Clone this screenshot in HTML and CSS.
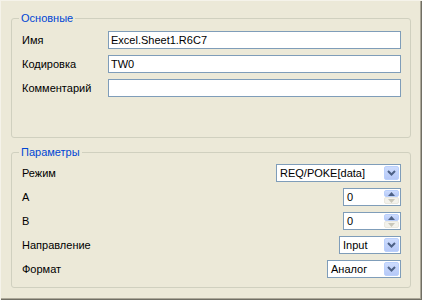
FILE: index.html
```html
<!DOCTYPE html>
<html lang="ru">
<head>
  <meta charset="UTF-8">
  <title>DDE item properties</title>
  <link rel="stylesheet" href="styles.css">
</head>
<body>
  <div class="window">
    <fieldset class="group group-main">
      <legend>Основные</legend>
      <div class="rows">
        <div class="row">
          <span class="label">Имя</span>
          <div class="edit">Excel.Sheet1.R6C7</div>
        </div>
        <div class="row">
          <span class="label">Кодировка</span>
          <div class="edit">TW0</div>
        </div>
        <div class="row">
          <span class="label">Комментарий</span>
          <div class="edit"></div>
        </div>
      </div>
    </fieldset>

    <fieldset class="group group-params">
      <legend>Параметры</legend>
      <div class="rows">
        <div class="row">
          <span class="label">Режим</span>
          <div class="combo combo-mode">
            <span class="combo-text">REQ/POKE[data]</span>
            <span class="combo-btn">
              <svg width="9" height="6" viewBox="0 0 9 6"><path d="M1 1 L4.5 4.5 L8 1" fill="none" stroke="#4d6185" stroke-width="2"/></svg>
            </span>
          </div>
        </div>
        <div class="row">
          <span class="label">A</span>
          <div class="spin">
            <span class="spin-text">0</span>
            <span class="spin-btns">
              <span class="spin-up"><svg width="7" height="4" viewBox="0 0 7 4"><path d="M0 4 L3.5 0 L7 4 Z" fill="#4d6185"/></svg></span>
              <span class="spin-down"><svg width="7" height="4" viewBox="0 0 7 4"><path d="M0 0 L3.5 4 L7 0 Z" fill="#c9c7ba"/></svg></span>
            </span>
          </div>
        </div>
        <div class="row">
          <span class="label">B</span>
          <div class="spin">
            <span class="spin-text">0</span>
            <span class="spin-btns">
              <span class="spin-up"><svg width="7" height="4" viewBox="0 0 7 4"><path d="M0 4 L3.5 0 L7 4 Z" fill="#4d6185"/></svg></span>
              <span class="spin-down"><svg width="7" height="4" viewBox="0 0 7 4"><path d="M0 0 L3.5 4 L7 0 Z" fill="#c9c7ba"/></svg></span>
            </span>
          </div>
        </div>
        <div class="row">
          <span class="label">Направление</span>
          <div class="combo combo-dir">
            <span class="combo-text">Input</span>
            <span class="combo-btn">
              <svg width="9" height="6" viewBox="0 0 9 6"><path d="M1 1 L4.5 4.5 L8 1" fill="none" stroke="#4d6185" stroke-width="2"/></svg>
            </span>
          </div>
        </div>
        <div class="row">
          <span class="label">Формат</span>
          <div class="combo combo-format">
            <span class="combo-text">Аналог</span>
            <span class="combo-btn">
              <svg width="9" height="6" viewBox="0 0 9 6"><path d="M1 1 L4.5 4.5 L8 1" fill="none" stroke="#4d6185" stroke-width="2"/></svg>
            </span>
          </div>
        </div>
      </div>
    </fieldset>
  </div>
</body>
</html>
```

FILE: styles.css
```css
body {
  margin: 0;
  font-family: "Liberation Sans", Arial, sans-serif;
  font-size: 11px;
  color: #000000;
  background-color: #ece9d8;
}
.window {
  box-sizing: border-box;
  width: 422px;
  height: 300px;
  padding: 12px 11px 0 11px;
  background-color: #ece9d8;
  box-shadow: inset 1px 1px 0 #f5f3ea, inset -1px -1px 0 #716f64, inset -2px -2px 0 #aca899;
}
.group {
  margin: 0;
  border: 1px solid #d0d0bf;
  border-radius: 3px;
  padding: 6px 9px 40px 10px;
}
.group legend {
  margin-left: -3px;
  padding: 0 2px;
  line-height: 13px;
  color: #0046d5;
}
.group-params {
  margin-top: 8px;
  padding-top: 5px;
  padding-bottom: 9px;
}
.rows {
  display: flex;
  flex-direction: column;
  gap: 6px;
}
.row {
  display: flex;
  align-items: center;
  justify-content: space-between;
  height: 18px;
}
.label {
  width: 86px;
  white-space: nowrap;
}
.edit {
  box-sizing: border-box;
  flex: 1;
  height: 18px;
  border: 1px solid #7f9db9;
  background-color: #ffffff;
  padding: 0 2px;
  line-height: 16px;
  white-space: nowrap;
}
.combo,
.spin {
  box-sizing: border-box;
  display: flex;
  align-items: center;
  height: 18px;
  border: 1px solid #7f9db9;
  background-color: #ffffff;
}
.combo-mode {
  width: 125px;
}
.combo-dir {
  width: 62px;
}
.combo-format {
  width: 74px;
}
.combo-text,
.spin-text {
  flex: 1;
  padding-left: 3px;
  line-height: 16px;
  white-space: nowrap;
}
.combo-btn {
  box-sizing: border-box;
  display: flex;
  align-items: center;
  justify-content: center;
  width: 15px;
  height: 14px;
  margin-right: 1px;
  border: 1px solid #bad0fc;
  border-radius: 2px;
  background: linear-gradient(#cddcfd, #b6c9f7);
}
.spin {
  width: 58px;
}
.spin-btns {
  display: flex;
  flex-direction: column;
  gap: 0;
  margin-right: 1px;
}
.spin-up,
.spin-down {
  box-sizing: border-box;
  display: flex;
  align-items: center;
  justify-content: center;
  width: 15px;
  height: 7px;
  border-radius: 2px;
}
.spin-up {
  border: 1px solid #bad0fc;
  background: linear-gradient(#cddcfd, #b6c9f7);
}
.spin-down {
  border: 1px solid #eae8df;
  background-color: #f3f2ec;
}
```
